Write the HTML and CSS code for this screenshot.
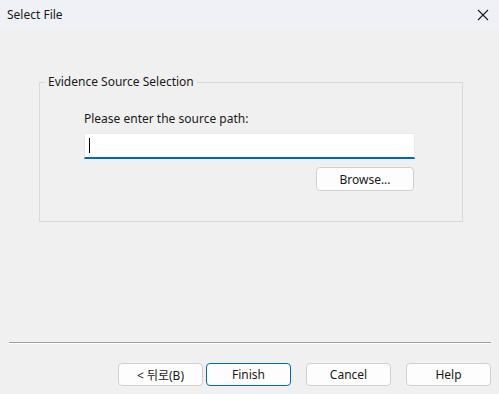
FILE: index.html
```html
<!DOCTYPE html>
<html lang="en">

<head>
    <meta charset="UTF-8">
    <title>Select File</title>
    <link rel="stylesheet" href="styles.css">
</head>

<body>
    <div class="window">
        <div class="titlebar">
            <span class="title">Select File</span>
            <span class="close-btn">
                <svg width="12" height="12" viewBox="0 0 12 12">
                    <path d="M1 1 L11 11 M11 1 L1 11" stroke="#1a1a1a" stroke-width="1.1" fill="none"/>
                </svg>
            </span>
        </div>
        <div class="content">
            <fieldset class="group">
                <legend>Evidence Source Selection</legend>
                <label class="path-label" for="source-path">Please enter the source path:</label>
                <div class="path-input">
                    <span class="caret"></span>
                </div>
                <div class="browse-row">
                    <button class="btn browse-btn">Browse...</button>
                </div>
            </fieldset>
        </div>
        <div class="footer">
            <div class="separator"></div>
            <div class="buttons">
                <button class="btn">&lt; 뒤로(B)</button>
                <button class="btn default-btn">Finish</button>
                <button class="btn cancel-btn">Cancel</button>
                <button class="btn">Help</button>
            </div>
        </div>
    </div>
</body>

</html>
```

FILE: styles.css
```css
body {
    margin: 0;
    font-family: "Noto Sans", "Noto Sans CJK KR", sans-serif;
    font-size: 12px;
    color: #1a1a1a;
    background-color: #f0f0f0;
}

.window {
    width: 499px;
    height: 394px;
    display: flex;
    flex-direction: column;
    overflow: hidden;
}

.titlebar {
    height: 29px;
    background-color: #eff1f7;
    display: flex;
    align-items: center;
    justify-content: space-between;
    padding: 0 10px 0 7px;
}

.title {
    font-size: 12px;
}

.close-btn {
    display: flex;
    align-items: center;
}

.content {
    flex: 1;
    padding: 45px 36px 0 39px;
}

.group {
    margin: 0;
    padding: 21px 47px 30px 44px;
    border: 1px solid #d9d9d9;
}

.group legend {
    padding: 0 3px;
    margin-left: -39px;
    line-height: 16px;
}

.path-label {
    display: block;
    line-height: 16px;
}

.path-input {
    margin-top: 6px;
    height: 23px;
    background-color: #fff;
    border: 1px solid #e9e9e9;
    border-bottom: 2px solid #0067c0;
    display: flex;
    align-items: center;
    padding-left: 4px;
}

.caret {
    width: 1px;
    height: 15px;
    background-color: #000;
}

.browse-row {
    display: flex;
    justify-content: flex-end;
    margin-top: 8px;
}

.btn {
    font-family: "Noto Sans", "Noto Sans CJK KR", sans-serif;
    font-size: 12px;
    color: #1a1a1a;
    background-color: #fdfdfd;
    border: 1px solid #d0d0d0;
    border-radius: 4px;
    width: 85px;
    height: 23px;
    padding: 0;
}

.browse-btn {
    width: 98px;
    height: 24px;
    margin-right: 1px;
}

.default-btn {
    border-color: #0067c0;
}

.footer {
    padding: 0 8px 8px 9px;
}

.separator {
    height: 1px;
    background-color: #a0a0a0;
    border-bottom: 1px solid #fff;
}

.buttons {
    display: flex;
    justify-content: flex-end;
    gap: 3px;
    margin-top: 19px;
}

.cancel-btn {
    margin-left: 12px;
    margin-right: 12px;
}
```
